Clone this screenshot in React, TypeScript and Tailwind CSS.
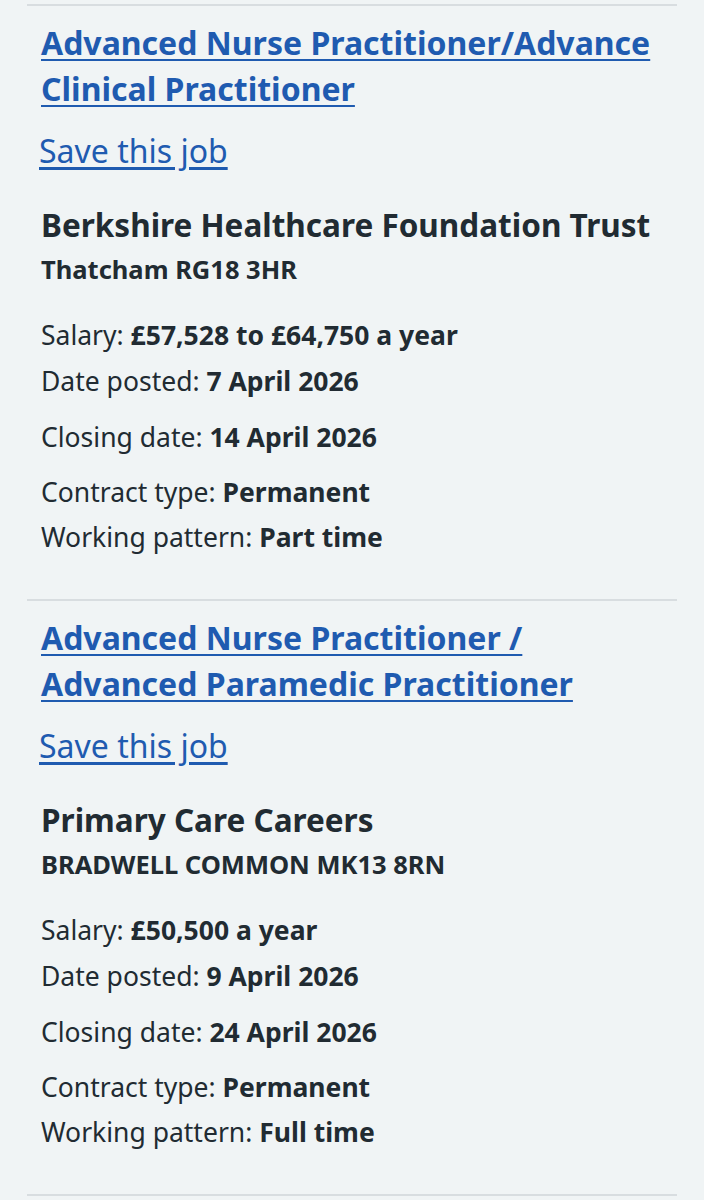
const jobs = [
  {
    title: "Advanced Nurse Practitioner/Advance Clinical Practitioner",
    org: "Berkshire Healthcare Foundation Trust",
    location: "Thatcham RG18 3HR",
    salary: "£57,528 to £64,750 a year",
    posted: "7 April 2026",
    closing: "14 April 2026",
    contract: "Permanent",
    pattern: "Part time",
  },
  {
    title: "Advanced Nurse Practitioner / Advanced Paramedic Practitioner",
    org: "Primary Care Careers",
    location: "BRADWELL COMMON MK13 8RN",
    salary: "£50,500 a year",
    posted: "9 April 2026",
    closing: "24 April 2026",
    contract: "Permanent",
    pattern: "Full time",
  },
];

const Row = ({ label, value }: { label: string; value: string }) => (
  <p className="text-[26.5px] leading-[36px]">
    {label}: <span className="font-bold">{value}</span>
  </p>
);

export default function App() {
  return (
    <div
      className="min-h-screen bg-[#f0f4f5] pt-[4px] text-[#212b32]"
      style={{ fontFamily: "'Noto Sans', sans-serif" }}
    >
      <ul className="mx-[27px]">
        {jobs.map((job) => (
          <li key={job.title} className="border-t-2 border-[#d8dde0] pl-[14px] pr-[10px] pt-[14px] pb-[44px]">
            <h2 className="text-[32px] leading-[46px] font-bold">
              <a href="#" className="text-[#1f5bb0] underline decoration-2 underline-offset-[4px]">
                {job.title}
              </a>
            </h2>
            <a href="#" className="-ml-[2px] mt-[19px] block text-[32px] leading-[40px] text-[#1f5bb0] underline underline-offset-[4px]">
              Save this job
            </a>
            <h3 className="mt-[34px] text-[31.5px] leading-[40px] font-bold">{job.org}</h3>
            <p className="mt-[9px] text-[25.5px] leading-[30px] font-bold">{job.location}</p>
            <div className="mt-[33px]">
              <Row label="Salary" value={job.salary} />
              <div className="mt-[10px]">
                <Row label="Date posted" value={job.posted} />
              </div>
              <div className="mt-[20px]">
                <Row label="Closing date" value={job.closing} />
              </div>
              <div className="mt-[19px]">
                <Row label="Contract type" value={job.contract} />
              </div>
              <div className="mt-[9px]">
                <Row label="Working pattern" value={job.pattern} />
              </div>
            </div>
          </li>
        ))}
        <li className="border-t-2 border-[#d8dde0] h-[10px]" />
      </ul>
    </div>
  );
}
